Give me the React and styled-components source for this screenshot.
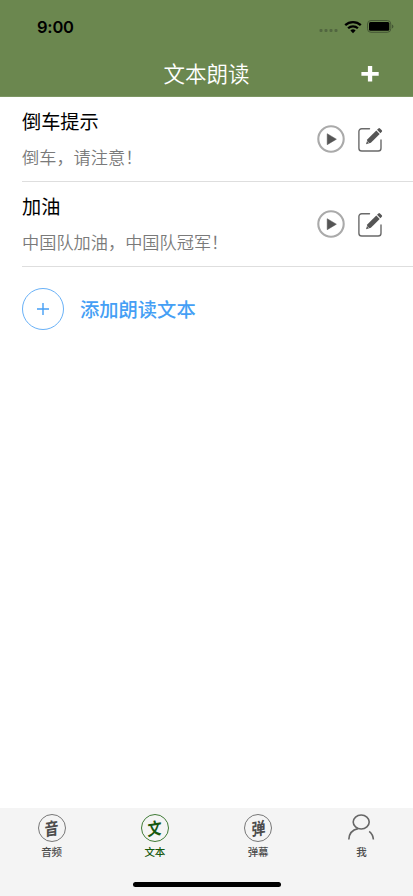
import styled, { createGlobalStyle } from "styled-components";

const items = [
  { title: "倒车提示", text: "倒车，请注意！" },
  { title: "加油", text: "中国队加油，中国队冠军！" },
];

const tabs = [
  { label: "音频", glyph: "音" },
  { label: "文本", glyph: "文", active: true },
  { label: "弹幕", glyph: "弹" },
  { label: "我" },
];

const PlayIcon = () => (
  <svg width="28" height="28" viewBox="0 0 28 28">
    <circle cx="14" cy="14" r="12.7" fill="none" stroke="#aaa" strokeWidth="2.1" />
    <path d="M10.2 8.700v11l9.200-5.500z" fill="#555" stroke="#555" strokeWidth="0.5" />
  </svg>
);

const EditIcon = () => (
  <svg width="26" height="26" viewBox="0 0 26 26" fill="none">
    <path
      d="M11.500 2.700H3.700a2.800 2.800 0 0 0-2.800 2.800V22.200a2.800 2.800 0 0 0 2.800 2.800h16.500a2.800 2.800 0 0 0 2.800-2.800V14"
      stroke="#6a6a6a"
      strokeWidth="1.400"
      strokeLinecap="round"
    />
    <path d="M8 18.200l1.500-4.900 8.800-8.800 3.400 3.400-8.800 8.800z" fill="#555" />
    <path d="M19 3.800l1.400-1.400q.8-.8 1.600 0l1.800 1.800q.8.8 0 1.600l-1.400 1.400z" fill="#555" />
    <path d="M9.100 15.200l2 2" stroke="#fff" strokeWidth="0.500" />
  </svg>
);

const UserIcon = () => (
  <svg width="28" height="28" viewBox="0 0 28 28" fill="none" stroke="#666" strokeWidth="1.600">
    <ellipse cx="14.200" cy="8" rx="8" ry="7" />
    <path d="M11 14.600C5.500 15.800 2 20 1.800 25.500M22.200 17.300c2.300 1.800 3.900 4.600 4.200 8.200" />
  </svg>
);

const App = () => {
  return (
    <Screen>
      <GlobalStyle />
      <Header>
        <StatusBar>
          <Time>9:00</Time>
          <Signals>
            <svg width="20" height="6" viewBox="0 0 20 6" fill="#526640">
              <rect x="0.500" y="1" width="3" height="3" rx="1" />
              <rect x="5.500" y="1" width="3" height="3" rx="1" />
              <rect x="10.500" y="1" width="3" height="3" rx="1" />
              <rect x="15.500" y="1" width="3" height="3" rx="1" />
            </svg>
            <svg width="18" height="14" viewBox="0 0 18 14" fill="none" stroke="#000" strokeWidth="2.300">
              <path d="M1.200 5.200a11.200 11.200 0 0 1 15.600 0M4.100 8.300a7 7 0 0 1 9.800 0" />
              <path d="M9 13.200l-2.600-2.700a3.700 3.700 0 0 1 5.200 0z" fill="#000" stroke="none" />
            </svg>
            <svg width="27" height="13" viewBox="0 0 27 13">
              <rect x="0.500" y="0.500" width="23.300" height="11.800" rx="3.500" fill="none" stroke="#455735" />
              <rect x="2" y="2" width="20.300" height="8.800" rx="1.500" />
              <path d="M25 4.600q1.400.5 1.400 2T25 8.500z" fill="#455735" />
            </svg>
          </Signals>
        </StatusBar>
        <NavBar>
          <span />
          <Title>文本朗读</Title>
          <AddButton aria-label="添加">
            <svg width="18" height="16" viewBox="0 0 18 16" fill="#fff">
              <path d="M6.900 0h4.300v5.900h6.500v3.900h-6.500V15.500H6.900V9.800H.4V5.900h6.500z" />
            </svg>
          </AddButton>
        </NavBar>
      </Header>

      <List>
        {items.map((item) => (
          <Item key={item.title}>
            <Info>
              <ItemTitle>{item.title}</ItemTitle>
              <ItemText>{item.text}</ItemText>
            </Info>
            <Actions>
              <PlayIcon />
              <EditIcon />
            </Actions>
          </Item>
        ))}
        <AddRow>
          <AddCircle>
            <svg width="12" height="12" viewBox="0 0 12 12" stroke="#459ff5" strokeWidth="1.400">
              <path d="M6 0v12M0 6h12" />
            </svg>
          </AddCircle>
          <AddText>添加朗读文本</AddText>
        </AddRow>
      </List>

      <Footer>
        <Tabs>
          {tabs.map((tab) => (
            <Tab key={tab.label} $active={tab.active}>
              {tab.glyph ? (
                <Seal $active={tab.active}>
                  <Glyph>{tab.glyph}</Glyph>
                </Seal>
              ) : (
                <UserIcon />
              )}
              <TabLabel>{tab.label}</TabLabel>
            </Tab>
          ))}
        </Tabs>
        <HomeBar />
      </Footer>
    </Screen>
  );
};

export default App;

const GlobalStyle = createGlobalStyle`
  * {
    box-sizing: border-box;
  }

  body {
    margin: 0;
    background: #fff;
    font-family: "Noto Sans CJK SC", sans-serif;
  }

  svg {
    display: block;
    flex-shrink: 0;
  }
`;

const Screen = styled.div`
  width: 100%;
  height: 896px;
  display: flex;
  flex-direction: column;
  overflow: hidden;
`;

const Header = styled.header`
  height: 97px;
  flex-shrink: 0;
  background: #6b874f;
  border-bottom: 1px solid #7c9663;
`;

const StatusBar = styled.div`
  height: 52px;
  padding: 1px 19px 0 37px;
  display: flex;
  align-items: center;
  justify-content: space-between;
`;

const Time = styled.span`
  font-family: Inter, sans-serif;
  font-size: 16.5px;
  font-weight: 600;
  letter-spacing: -0.2px;
  color: #000;
`;

const Signals = styled.div`
  display: flex;
  align-items: center;
  gap: 5px;

  svg:first-child {
    margin-top: 9px;
  }
`;

const NavBar = styled.div`
  height: 44px;
  display: grid;
  grid-template-columns: 1fr auto 1fr;
  align-items: center;
`;

const Title = styled.h1`
  margin: 0;
  font-size: 21.5px;
  line-height: 42px;
  padding-bottom: 2px;
  font-weight: 350;
  color: #fff;
`;

const AddButton = styled.button`
  justify-self: end;
  margin: 0 34px 0 0;
  padding: 0;
  border: 0;
  background: none;
`;

const List = styled.main`
  flex: 1;
  padding-left: 22px;
`;

const Item = styled.div`
  height: 85px;
  padding-right: 29px;
  display: flex;
  align-items: center;
  justify-content: space-between;
  border-bottom: 1px solid #dedede;
`;

const Info = styled.div`
  display: flex;
  flex-direction: column;
  gap: 8px;
`;

const ItemTitle = styled.div`
  font-size: 19.2px;
  line-height: 28px;
  color: #000;
`;

const ItemText = styled.div`
  font-size: 17.2px;
  line-height: 28px;
  font-weight: 350;
  color: #7a7a7a;
`;

const Actions = styled.div`
  display: flex;
  align-items: center;
  gap: 13px;
`;

const AddRow = styled.div`
  height: 84px;
  display: flex;
  align-items: center;
  gap: 16px;
`;

const AddCircle = styled.div`
  width: 42px;
  height: 42px;
  display: flex;
  align-items: center;
  justify-content: center;
  border: 1px solid #69b1f7;
  border-radius: 50%;
`;

const AddText = styled.div`
  font-size: 19.3px;
  font-weight: 500;
  color: #459ff5;
`;

const Footer = styled.footer`
  height: 88px;
  flex-shrink: 0;
  display: flex;
  flex-direction: column;
  align-items: center;
  justify-content: space-between;
  padding-bottom: 9px;
  background: #f4f4f4;
`;

const Tabs = styled.nav`
  width: 100%;
  display: grid;
  grid-template-columns: repeat(4, 1fr);
`;

const Tab = styled.div`
  padding-top: 6px;
  display: flex;
  flex-direction: column;
  align-items: center;
  color: ${(props) => (props.$active ? "#17590f" : "#4c4c4c")};
`;

const Seal = styled.div`
  width: 28px;
  height: 28px;
  display: flex;
  align-items: center;
  justify-content: center;
  border: 1.3px solid ${(props) => (props.$active ? "#3f7a35" : "#777")};
  border-radius: 50%;
`;

const Glyph = styled.span`
  font-size: 17px;
  line-height: 26px;
  font-weight: 700;
  transform: skewY(-9deg) scaleX(0.82);
`;

const TabLabel = styled.span`
  margin-top: 2px;
  font-size: 10.5px;
  line-height: 16px;
  font-weight: 500;
`;

const HomeBar = styled.div`
  width: 148px;
  height: 5px;
  border-radius: 3px;
  background: #000;
`;
